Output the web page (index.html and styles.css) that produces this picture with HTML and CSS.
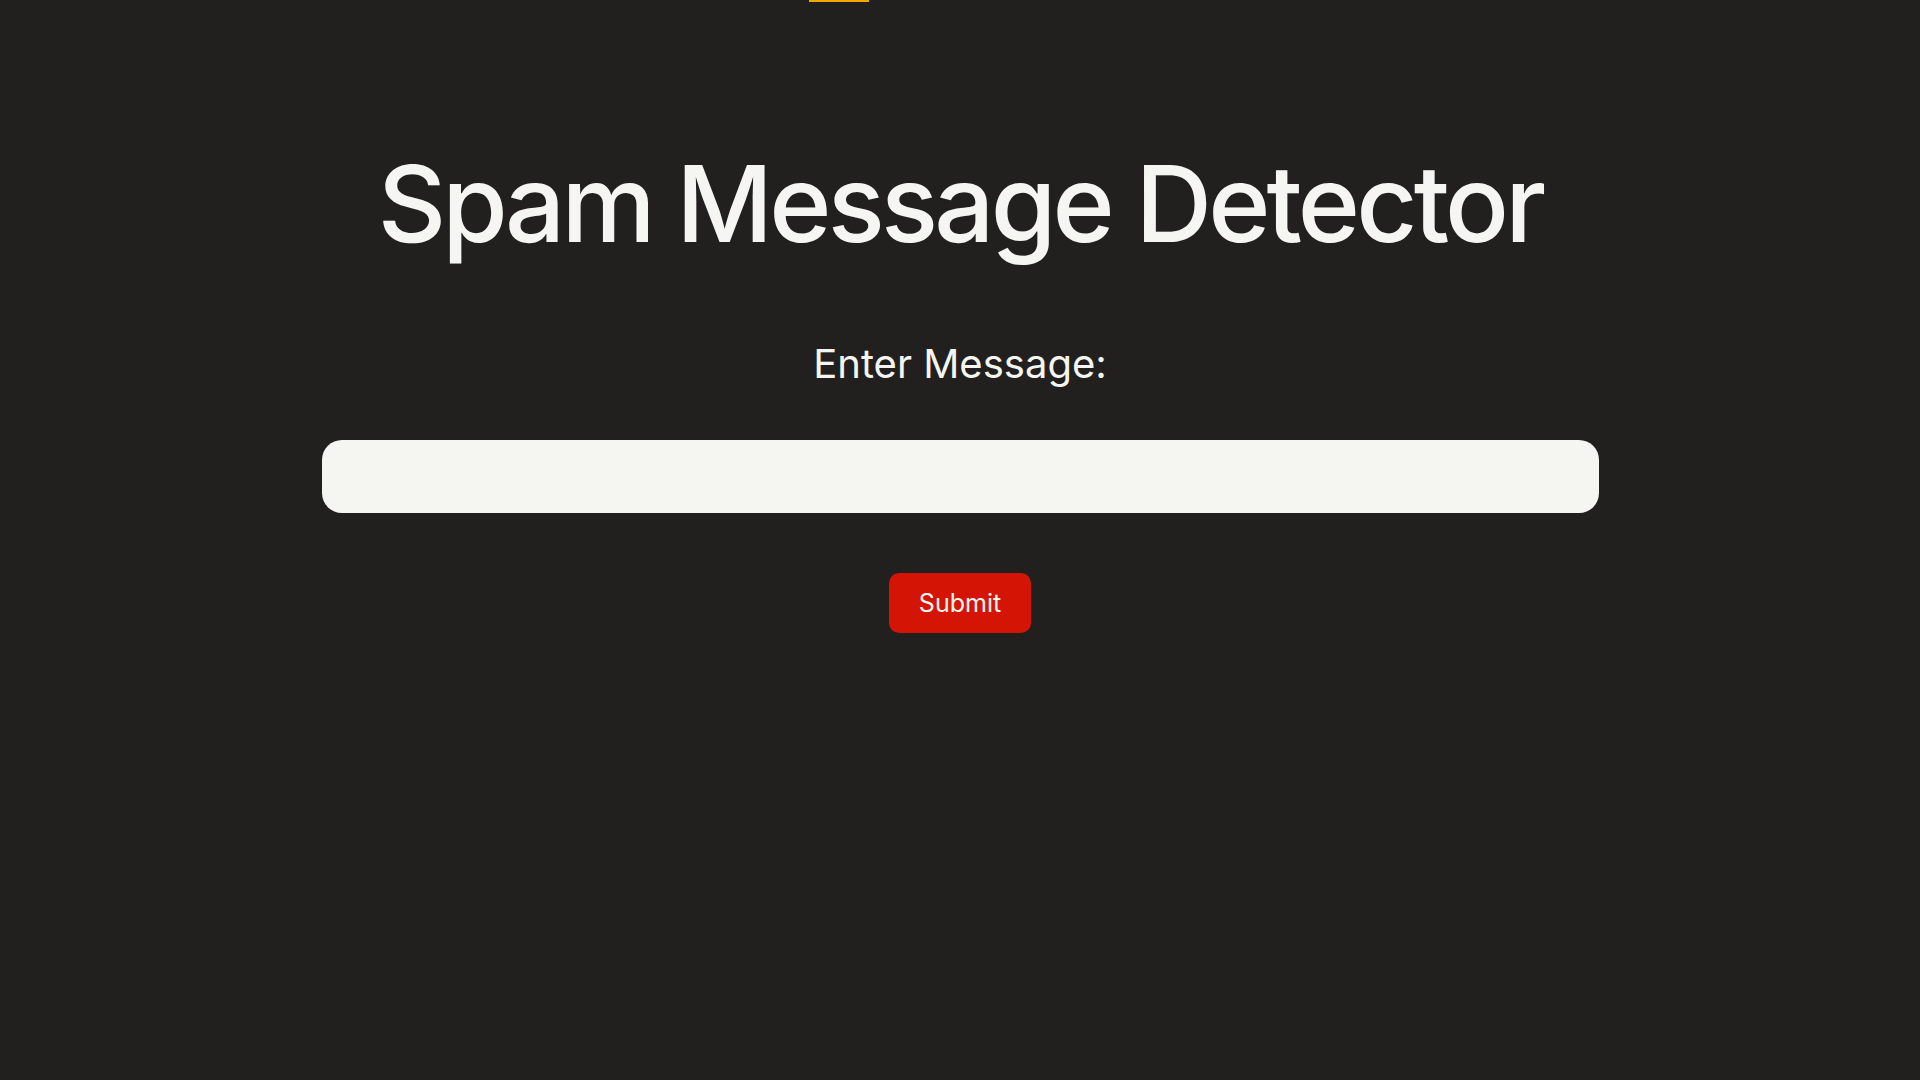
FILE: index.html
```html
<!DOCTYPE html>
<html lang="en">
<head>
<meta charset="utf-8">
<title>Spam Message Detector</title>
<link rel="stylesheet" href="styles.css">
</head>
<body>
<div class="topbar"></div>
<main class="page">
  <h1 class="title">Spam Message Detector</h1>
  <form class="form">
    <label class="label" for="msg">Enter Message:</label>
    <input class="input" id="msg" type="text">
    <button class="submit" type="button">Submit</button>
  </form>
</main>
</body>
</html>
```
FILE: styles.css
```css
html, body {
  margin: 0;
  padding: 0;
  background: #21201f;
  color: #f5f5f1;
  font-family: Inter, "Noto Sans", sans-serif;
}
.topbar {
  position: absolute;
  top: 0;
  left: 809px;
  width: 60px;
  height: 2px;
  background: #f0a800;
}
.page {
  display: flex;
  flex-direction: column;
  align-items: center;
  padding-top: 140px;
}
.title {
  margin: 0;
  font-size: 106px;
  font-weight: 500;
  line-height: 1.2;
  letter-spacing: -3.8px;
}
.form {
  display: flex;
  flex-direction: column;
  align-items: center;
  width: 100%;
  margin-top: 73px;
}
.label {
  font-size: 40px;
  line-height: 48px;
}
.input {
  box-sizing: border-box;
  margin-top: 52px;
  width: 1277px;
  height: 73px;
  border: none;
  border-radius: 20px;
  background: #f5f5f1;
  outline: none;
  font-size: 24px;
  padding: 0 20px;
}
.submit {
  margin-top: 60px;
  width: 142px;
  height: 60px;
  border: none;
  border-radius: 10px;
  background: #d41505;
  color: #f5f5f1;
  font-family: Inter, "Noto Sans", sans-serif;
  font-size: 25px;
  cursor: pointer;
}
```
